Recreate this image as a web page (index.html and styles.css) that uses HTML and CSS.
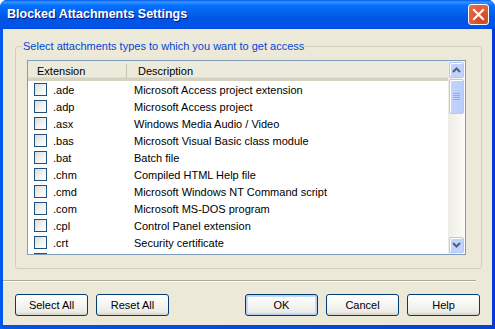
FILE: index.html
```html
<!DOCTYPE html>
<html>
<head>
<meta charset="utf-8">
<link rel="stylesheet" href="styles.css">
</head>
<body>
<div class="window">
  <div class="titlebar">
    <span class="title">Blocked Attachments Settings</span>
    <span class="close"><svg width="13" height="13" viewBox="0 0 13 13"><path d="M2 2 L11 11 M11 2 L2 11" stroke="#fff" stroke-width="2.2" stroke-linecap="square"/></svg></span>
  </div>
  <div class="client">
    <fieldset class="group">
      <legend>Select attachments types to which you want to get access</legend>
      <div class="list">
        <div class="listmain">
          <div class="header">
            <div class="hcol hext">Extension</div>
            <div class="hcol hdesc">Description</div>
          </div>
          <div class="rows">
            <div class="row"><span class="cb"></span><span class="ext">.ade</span><span class="desc">Microsoft Access project extension</span></div>
            <div class="row"><span class="cb"></span><span class="ext">.adp</span><span class="desc">Microsoft Access project</span></div>
            <div class="row"><span class="cb"></span><span class="ext">.asx</span><span class="desc">Windows Media Audio / Video</span></div>
            <div class="row"><span class="cb"></span><span class="ext">.bas</span><span class="desc">Microsoft Visual Basic class module</span></div>
            <div class="row"><span class="cb"></span><span class="ext">.bat</span><span class="desc">Batch file</span></div>
            <div class="row"><span class="cb"></span><span class="ext">.chm</span><span class="desc">Compiled HTML Help file</span></div>
            <div class="row"><span class="cb"></span><span class="ext">.cmd</span><span class="desc">Microsoft Windows NT Command script</span></div>
            <div class="row"><span class="cb"></span><span class="ext">.com</span><span class="desc">Microsoft MS-DOS program</span></div>
            <div class="row"><span class="cb"></span><span class="ext">.cpl</span><span class="desc">Control Panel extension</span></div>
            <div class="row"><span class="cb"></span><span class="ext">.crt</span><span class="desc">Security certificate</span></div>
            <div class="row"><span class="cb"></span></div>
          </div>
        </div>
        <div class="scrollbar">
          <div class="sbtn"><svg width="9" height="6" viewBox="0 0 9 6"><path d="M1 5 L4.5 1.5 L8 5" fill="none" stroke="#4D6185" stroke-width="2"/></svg></div>
          <div class="thumb"><span class="grip"></span><span class="grip"></span><span class="grip"></span><span class="grip"></span></div>
          <div class="track"></div>
          <div class="sbtn"><svg width="9" height="6" viewBox="0 0 9 6"><path d="M1 1 L4.5 4.5 L8 1" fill="none" stroke="#4D6185" stroke-width="2"/></svg></div>
        </div>
      </div>
    </fieldset>
    <div class="sep"></div>
    <div class="buttons">
      <button class="btn">Select All</button>
      <button class="btn">Reset All</button>
      <span class="spacer"></span>
      <button class="btn default">OK</button>
      <button class="btn">Cancel</button>
      <button class="btn">Help</button>
    </div>
  </div>
</div>
</body>
</html>
```
FILE: styles.css
```css
* { box-sizing: border-box; }
html, body { margin: 0; padding: 0; background: #fff; }
body { font-family: "Liberation Sans", Arial, sans-serif; font-size: 11px; color: #000; }
.window {
  width: 495px; height: 329px;
  display: flex; flex-direction: column;
  background: linear-gradient(90deg, #0058EE 0, #0055E5 4px, #0044D0 491px, #0831D9 495px);
  border-radius: 7px 7px 0 0;
  overflow: hidden;
}
.titlebar {
  height: 29px; flex: none;
  display: flex; align-items: center;
  padding: 0 6px 1px 7px;
  background: linear-gradient(#0058EE 0%, #3A93FF 7%, #288EFF 10%, #127DFF 14%, #036FFC 20%, #0262EE 44%, #0057E5 60%, #0054E3 76%, #0055EB 90%, #0048D9 100%);
}
.title {
  flex: 1;
  color: #fff; font-weight: bold; font-size: 12.5px;
  font-family: "Liberation Sans", Arial, sans-serif;
  text-shadow: 1px 1px 0 #0A1883;
}
.close {
  width: 21px; height: 21px;
  border: 1px solid #fff; border-radius: 3px;
  background: radial-gradient(circle at 70% 75%, #CC4420 0%, #E05A38 50%, #E87050 100%);
  display: flex; align-items: center; justify-content: center;
  margin-top: 1px;
}
.client {
  flex: 1;
  margin: 0 3px 4px 3px;
  background: #ECE9D8;
  display: flex; flex-direction: column;
}
.group {
  margin: 11px 10px 0 12px;
  padding: 7px 15px 12px 11px;
  border: 1px solid #D0D0BF;
  border-radius: 3px;
  height: 229px;
}
.group legend {
  color: #0046D5; padding: 0 1px; margin-left: -5px;
  font-size: 11px; line-height: 13px;
}
.list {
  height: 195px;
  border: 1px solid #7F9DB9;
  background: #fff;
  display: flex;
}
.listmain { flex: 1; overflow: hidden; }
.header {
  height: 20px; display: flex; align-items: center;
  background: #EBEADB;
  border-bottom: 3px solid #D6D2C2;
  box-shadow: inset 0 -1px 0 #E2DECD;
  padding-top: 2px;
}
.hcol { height: 100%; display: flex; align-items: center; }
.hext { width: 99px; padding-left: 9px; border-right: 1px solid #C7C5B2; height: 14px; }
.hdesc { padding-left: 11px; }
.row { height: 17px; display: flex; align-items: center; }
.cb {
  width: 13px; height: 13px; flex: none;
  margin-left: 6px; margin-right: 6px;
  border: 1px solid #1C5180;
  background: linear-gradient(135deg, #DCDCD7 0%, #F4F4F1 60%, #fff 100%);
}
.ext { width: 81px; }
.scrollbar {
  width: 17px; flex: none;
  display: flex; flex-direction: column;
  background: linear-gradient(90deg, #EEEDE5 0%, #F5F4EE 50%, #FBFBF8 100%);
  padding: 1px 0;
}
.sbtn {
  height: 16px; margin: 0 1px;
  background: #C1D3FB;
  border: 1px solid #B4C8F6; border-radius: 2px;
  box-shadow: inset 1px 1px 0 #fff;
  display: flex; align-items: center; justify-content: center;
}
.thumb {
  height: 35px; margin: 1px 1px 0 1px;
  background: linear-gradient(90deg, #C4D5FB, #B9CDFA);
  border: 1px solid #B4C8F6; border-radius: 2px;
  box-shadow: inset 1px 1px 0 #fff;
  display: flex; flex-direction: column; align-items: center; justify-content: center; gap: 1px;
}
.grip { width: 7px; height: 1px; background: #8CB0F8; }
.track { flex: 1; }
.sep {
  height: 2px; margin: 11px 16px 0 0;
  border-top: 1px solid #ACA899; border-bottom: 1px solid #fff;
}
.buttons {
  display: flex; gap: 8px;
  margin: 12px 12px 0 12px;
}
.spacer { flex: 1; }
.btn {
  width: 73px; height: 22px;
  font-family: "Liberation Sans", Arial, sans-serif; font-size: 11px; color: #000;
  border: 1px solid #003C74; border-radius: 3px;
  background: linear-gradient(#FFFFFF 0%, #F7F7F4 40%, #ECEBE6 85%, #D6D0C5 100%);
  padding: 0;
}
.btn.default {
  box-shadow: inset 0 0 0 1px #B6CCF5, inset 0 0 0 2px #CADBF8;
}
```
